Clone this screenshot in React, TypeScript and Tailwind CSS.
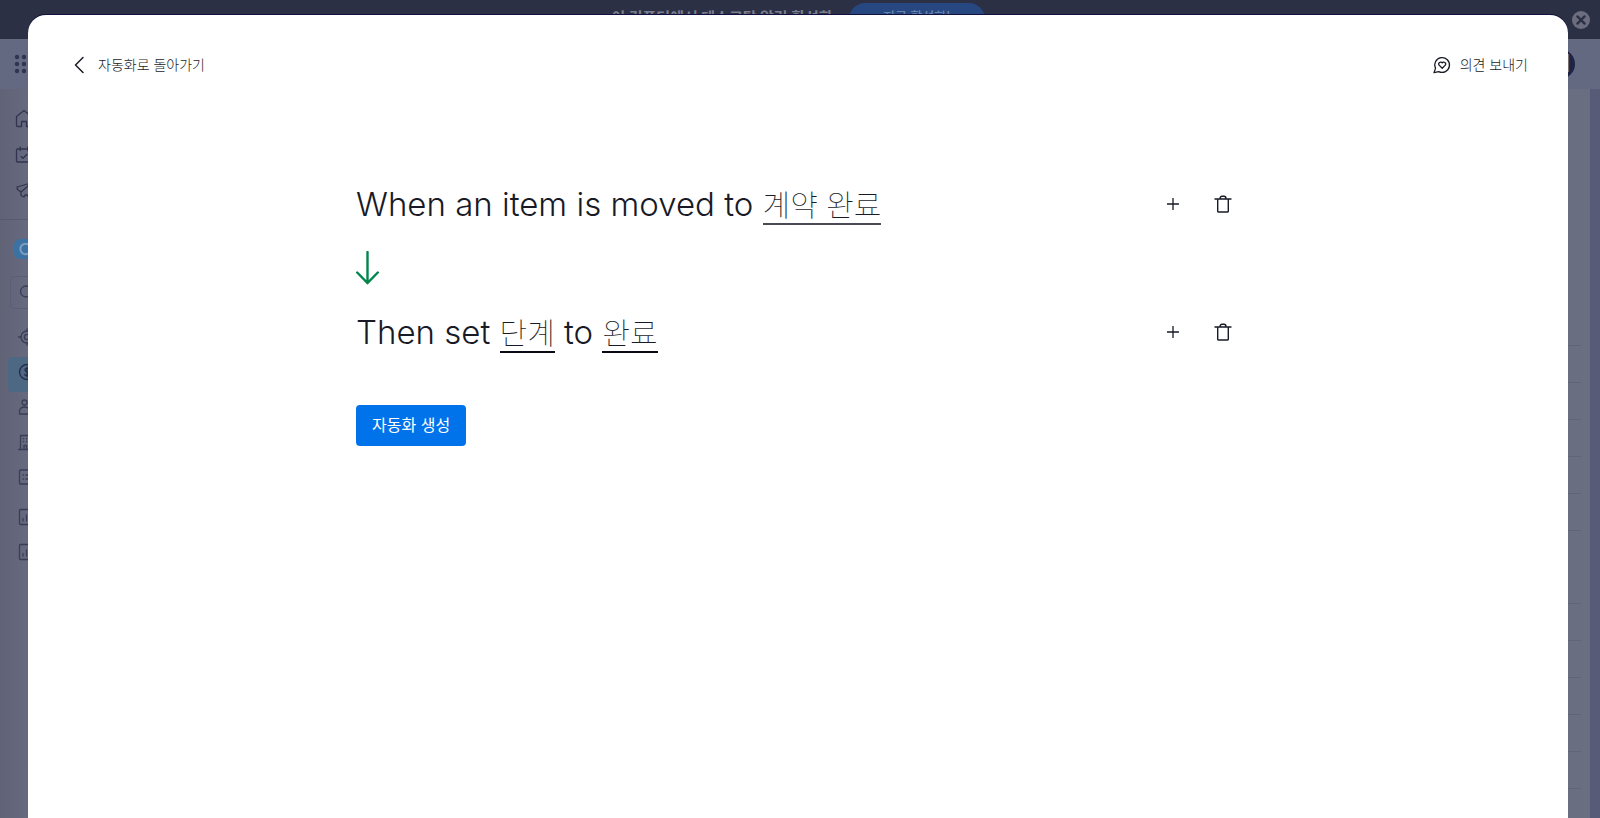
import type { ReactNode } from "react";

type IconProps = { children: ReactNode; size?: string; stroke?: string };

function Icon({ children, size = "size-5", stroke = "1.3" }: IconProps) {
  return (
    <svg
      viewBox="0 0 20 20"
      className={`${size} shrink-0`}
      fill="none"
      stroke="currentColor"
      strokeWidth={stroke}
      strokeLinecap="round"
      strokeLinejoin="round"
      aria-hidden="true"
    >
      {children}
    </svg>
  );
}

const MAIN_LINKS = [
  { id: "home", label: "홈", icon: <path d="M2.5 7.5 10 1.5l7.5 6v9a1 1 0 0 1-1 1H12.5v-5h-5v5H3.5a1 1 0 0 1-1-1z" /> },
  { id: "work", label: "내 작업", icon: <path d="M3.5 4h13a1 1 0 0 1 1 1v11a1 1 0 0 1-1 1h-13a1 1 0 0 1-1-1V5a1 1 0 0 1 1-1zM6.2 2v3.5M13.8 2v3.5M7 11.5l2 1.8 4-4" /> },
  { id: "campaign", label: "캠페인", icon: <path d="M3 6 17 2l-3 13-2.5-1.5L10 16l-3-1.5V11L3.500 8.500zM7 11l7-6" /> },
];

const BOARD_LINKS = [
  { id: "leads", label: "리드", icon: <><circle cx="10" cy="10" r="6" /><circle cx="10" cy="10" r="2.6" /><path d="M10 4V1.8M10 18.2V16M4 10H1.5M18.5 10H16" /></> },
  { id: "deals", label: "거래", active: true, icon: <><circle cx="10" cy="10" r="7.5" /><path d="M12 7.5c-.4-.8-1.1-1.1-2-1.1-1.2 0-2 .7-2 1.7 0 2.4 4.2 1.3 4.2 3.8 0 1.1-.9 1.8-2.2 1.8-1 0-1.900-.5-2.200-1.300M10 5.200v9.600" /></> },
  { id: "contacts", label: "연락처", icon: <><circle cx="7.5" cy="5.5" r="2.5" /><path d="M2.5 17v-2.5c0-2.500 2-4.500 5-4.500s5 2 5 4.500V17zM13 3.500a2.500 2.500 0 0 1 0 4.500M15 10.500c1.500.8 2.500 2.200 2.500 4V17" /></> },
  { id: "accounts", label: "계정", icon: <path d="M1.5 17.5h17M3.5 17.5v-14h9v14M12.5 8h4v9.5M6.5 6.500v.2M9.500 6.500v.2M6.500 9.500v.2M9.500 9.500v.2M7 17.500v-4h2.500v4" /> },
  { id: "products", label: "제품", icon: <path d="M3.5 3h13a1 1 0 0 1 1 1v12a1 1 0 0 1-1 1h-13a1 1 0 0 1-1-1V4a1 1 0 0 1 1-1zM6 8h.5M9 8h5M6 12h.5M9 12h5" /> },
];

const DASHBOARD_LINKS = [
  { id: "sales", label: "판매 대시보드" },
  { id: "activity", label: "활동 대시보드" },
];

const ChartIcon = () => (
  <Icon>
    <path d="M3.5 2.5h13a1 1 0 0 1 1 1v13a1 1 0 0 1-1 1h-13a1 1 0 0 1-1-1v-13a1 1 0 0 1 1-1zM6 14v-2.5M9.5 14V8M13 14v-4" />
  </Icon>
);

function TopBanner() {
  return (
    <div className="flex h-[39px] shrink-0 items-start bg-[#2c3044] pr-2.5">
      <div className="flex flex-1 items-start justify-center pl-6">
        <span className="pt-2 text-[15px] leading-5 font-bold text-[#7b7e8f]">이 컴퓨터에서 데스크탑 알림 활성화</span>
        <button className="ml-4 mt-[3px] h-8 w-[136px] rounded-full bg-[#26477f] pb-1 text-[13px] font-medium text-[#6783ad]">
          지금 활성화!
        </button>
      </div>
      <button aria-label="닫기" className="mt-[11px] flex size-[18px] items-center justify-center rounded-full bg-[#6c6e80] text-[#2c3044]">
        <Icon size="size-3" stroke="4">
          <path d="m4 4 12 12M16 4 4 16" />
        </Icon>
      </button>
    </div>
  );
}

function Sidebar() {
  return (
    <aside className="w-[270px] shrink-0 bg-linear-to-r from-[#606376] to-[#67697e] to-10% text-[#3a3d58]">
      <nav className="px-3.5 pt-3 text-[#303450]">
        {MAIN_LINKS.map((link) => (
          <a key={link.id} href={`#${link.id}`} aria-label={link.label} className="flex h-9 items-center">
            <Icon>{link.icon}</Icon>
          </a>
        ))}
      </nav>
      <div className="mt-2.5 border-t border-[#575a73]" />
      <div className="mt-[19px] px-3.5">
        <div className="flex size-5 items-center justify-center rounded-md bg-[#3b72a3] text-[#7f9fbe]">
          <Icon size="size-4" stroke="2.5">
            <circle cx="12" cy="10" r="6.5" />
          </Icon>
        </div>
      </div>
      <div className="mx-2.5 mt-[17px] flex h-[33px] items-center rounded border border-[#5b5e76] px-2">
        <Icon>
          <circle cx="7" cy="8.5" r="5.5" />
          <path d="m11 12.5 4.5 4.5" />
        </Icon>
      </div>
      <nav className="mt-[13px] px-2">
        {BOARD_LINKS.map((link) => (
          <a
            key={link.id}
            href={`#${link.id}`}
            aria-label={link.label}
            className={`flex h-[35px] rounded px-[9px] pt-[5px] ${link.active ? "bg-[#4d6883] text-[#262b48]" : ""}`}
          >
            <Icon>{link.icon}</Icon>
          </a>
        ))}
        <div className="pt-[5px]">
          {DASHBOARD_LINKS.map((link) => (
            <a key={link.id} href={`#${link.id}`} aria-label={link.label} className="flex h-[35px] px-[9px] pt-[5px]">
              <ChartIcon />
            </a>
          ))}
        </div>
      </nav>
    </aside>
  );
}

function BoardBackground() {
  return (
    <main className="flex flex-1 bg-[#6a6e81]">
      <div className="flex-1 pr-[9px] pt-[220px]">
        {Array.from({ length: 6 }, (_, i) => (
          <div key={i} className="h-[37px] border-b border-[#60647b]" />
        ))}
        <div className="h-9" />
        {Array.from({ length: 6 }, (_, i) => (
          <div key={i} className="h-[37px] border-b border-[#60647b]" />
        ))}
      </div>
      <div className="w-2.5 bg-[#575b77]" />
    </main>
  );
}

function RowActions() {
  return (
    <div className="flex shrink-0 items-center gap-[30px]">
      <button aria-label="추가">
        <Icon>
          <path d="M10 4v12M4 10h12" strokeLinecap="butt" />
        </Icon>
      </button>
      <button aria-label="삭제">
        <Icon stroke="1.4">
          <path d="M2 5h16M4.7 5v12.3a.7.7 0 0 0 .7.7h9.2a.7.7 0 0 0 .7-.7V5M7 4.8C7 3 7.8 2.2 9 2.2h2c1.2 0 2 .8 2 2.6" />
        </Icon>
      </button>
    </div>
  );
}

function Token({ children, muted = false }: { children: ReactNode; muted?: boolean }) {
  return (
    <button className={`border-b-2 text-[30px] leading-9 font-thin ${muted ? "border-[#484a56]" : "border-[#0a0a16]"}`}>
      {children}
    </button>
  );
}

function Sentence({ children }: { children: ReactNode }) {
  return (
    <div className="flex h-12 items-center justify-between">
      <h2 className="text-[33px] leading-[46px] font-light">{children}</h2>
      <RowActions />
    </div>
  );
}

export default function App() {
  return (
    <div className="relative flex h-screen flex-col overflow-hidden bg-[#6a6e81] font-['Inter','Noto_Sans_CJK_KR',sans-serif] text-[#181a26]">
      <TopBanner />
      <header className="flex h-[50px] shrink-0 items-center justify-between bg-[#636980] pl-3.5 pr-[25px]">
        <svg viewBox="0 0 20 20" className="size-5 text-[#303450]" fill="currentColor" aria-hidden="true">
          {[3, 10, 17].map((y) => [3, 10, 17].map((x) => <circle key={`${x}-${y}`} cx={x} cy={y} r="2.2" />))}
        </svg>
        <span className="flex size-[30px] items-center justify-center rounded-full bg-[#202343] text-2xl text-[#777a91]">M</span>
      </header>
      <div className="flex min-h-0 flex-1">
        <Sidebar />
        <BoardBackground />
      </div>

      <section
        role="dialog"
        aria-label="자동화"
        className="absolute bottom-0 left-7 right-8 top-[15px] rounded-t-[18px] bg-white px-10 shadow-[0_-1px_0_#12103c]"
      >
        <div className="flex h-[100px] items-center justify-between text-sm font-light text-[#181a26]">
          <button className="flex items-center gap-2 pl-0.5">
            <Icon stroke="1.5">
              <path d="M13 2.5 5.5 10l7.5 7.5" />
            </Icon>
            자동화로 돌아가기
          </button>
          <button className="flex items-center gap-2">
            <Icon>
              <path d="M3.5 13.4A7.4 7.4 0 1 1 6.7 16.6L2 17.6z" />
              <path d="M10.2 13.2 7.1 10.1a1.9 1.9 0 0 1 3.1-2.2 1.9 1.9 0 0 1 3.1 2.2z" />
            </Icon>
            의견 보내기
          </button>
        </div>

        <div className="mx-auto mt-[65px] max-w-[884px] pr-[7px]">
          <Sentence>
            When an item is moved to <Token muted>계약 완료</Token>
          </Sentence>
          <svg viewBox="0 0 24 34" className="my-[23px] h-[34px] w-6 text-[#00854d]" fill="none" stroke="currentColor" strokeWidth="2.4" strokeLinecap="round" aria-hidden="true">
            <path d="M11.5 1v31M1.2 21.5 11.5 32l10.3-10.5" />
          </svg>
          <Sentence>
            Then set <Token>단계</Token> to <Token>완료</Token>
          </Sentence>
          <button className="mt-[49px] h-[41px] rounded bg-[#0073ea] px-4 pb-0.5 text-base text-white">
            자동화 생성
          </button>
        </div>
      </section>
    </div>
  );
}
